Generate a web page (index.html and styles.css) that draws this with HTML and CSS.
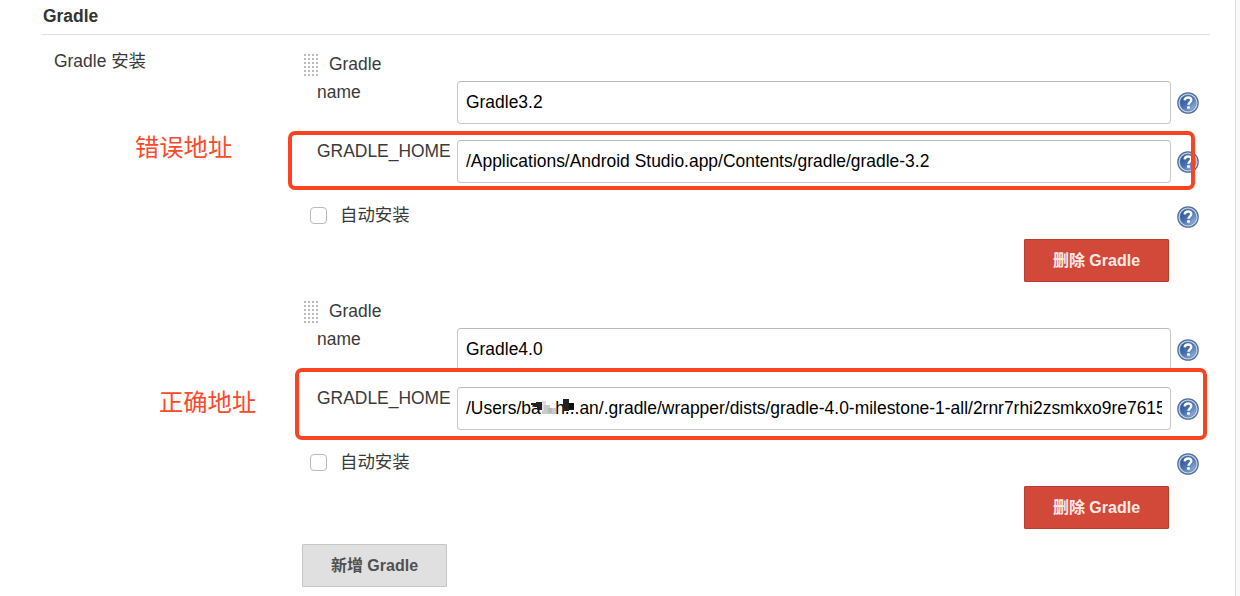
FILE: index.html
```html
<!DOCTYPE html>
<html lang="zh-CN">
  <head>
    <meta charset="UTF-8" />
    <title>Gradle</title>
    <link rel="stylesheet" href="styles.css">
  </head>
  <body>
    <!-- Shared help icon -->
    <svg class="defs" width="0" height="0">
      <defs>
        <linearGradient id="helpFill" x1="0" y1="0" x2="1" y2="1">
          <stop offset="0" stop-color="#234c90" />
          <stop offset="0.5" stop-color="#4a72b0" />
          <stop offset="1" stop-color="#a9c8ea" />
        </linearGradient>
        <symbol id="help" viewBox="0 0 22 22">
          <circle cx="11" cy="11" r="10.2" fill="#c3d3e8" stroke="#4f6c9b" stroke-width="1.2" />
          <circle cx="11" cy="11" r="8" fill="url(#helpFill)" stroke="#5378ad" stroke-width="0.6" />
          <path d="M7.6 8.4C7.8 6.4 9.1 5.5 11.1 5.5c1.9 0 3.2 1 3.2 2.6 0 2.2-2.8 2.3-2.8 4.7" fill="none" stroke="#fff" stroke-width="2.4" />
          <rect x="10" y="14.2" width="3" height="2.6" rx="0.8" fill="#fff" />
        </symbol>
      </defs>
    </svg>

    <main class="panel">
      <h1 class="section-title">Gradle</h1>
      <div class="section">
        <div class="section-label">Gradle 安装</div>
        <div class="installations">
          <div class="installation">
            <div class="drag-row"><span class="drag-handle"></span>Gradle</div>
            <div class="field">
              <label for="name1">name</label>
              <input class="text" id="name1" type="text" value="Gradle3.2">
              <svg class="help"><use href="#help" /></svg>
            </div>
            <div class="field">
              <label for="home1">GRADLE_HOME</label>
              <input class="text" id="home1" type="text" value="/Applications/Android Studio.app/Contents/gradle/gradle-3.2">
              <svg class="help"><use href="#help" /></svg>
            </div>
            <div class="auto-row">
              <input class="check" id="auto1" type="checkbox">
              <label for="auto1">自动安装</label>
              <svg class="help"><use href="#help" /></svg>
            </div>
            <button class="btn btn-delete">删除 Gradle</button>
          </div>

          <div class="installation">
            <div class="drag-row"><span class="drag-handle"></span>Gradle</div>
            <div class="field">
              <label for="name2">name</label>
              <input class="text" id="name2" type="text" value="Gradle4.0">
              <svg class="help"><use href="#help" /></svg>
            </div>
            <div class="field">
              <label for="home2">GRADLE_HOME</label>
              <input class="text" id="home2" type="text" value="/Users/ba   h...an/.gradle/wrapper/dists/gradle-4.0-milestone-1-all/2rnr7rhi2zsmkxo9re7615">
              <svg class="help"><use href="#help" /></svg>
            </div>
            <div class="auto-row">
              <input class="check" id="auto2" type="checkbox">
              <label for="auto2">自动安装</label>
              <svg class="help"><use href="#help" /></svg>
            </div>
            <button class="btn btn-delete">删除 Gradle</button>
          </div>

          <button class="btn btn-add">新增 Gradle</button>
        </div>
      </div>
    </main>

    <!-- Annotations over the form -->
    <div class="mark mark-wrong"></div>
    <div class="note note-wrong">错误地址</div>
    <div class="mark mark-right"></div>
    <div class="note note-right">正确地址</div>
    <svg class="smudge" width="46" height="17" viewBox="0 0 46 17">
      <path d="M0 5h5V4h6v8H6V9H3V7H0z" fill="#222" />
      <path d="M11 3h4v4h4v3h6v6H11z" fill="#c9c9c9" />
      <path d="M11 3h4v4h-2v6h-2z" fill="#dedede" />
      <path d="M17 10h4v5h-4z" fill="#b9b9b9" />
      <path d="M32 1h6v4h5v7h-5v1h-6z" fill="#222" />
      <path d="M38 5h5v6h-5z" fill="#111" />
    </svg>
  </body>
</html>
```

FILE: styles.css
```css
* {
  box-sizing: border-box;
}
body {
  position: relative;
  height: 596px;
  margin: 0;
  overflow: hidden;
  background: #f9f9f9;
  color: #3a3a3a;
  font-family: "Liberation Sans", "Noto Sans CJK SC", sans-serif;
  font-size: 17.45px;
  line-height: 24px;
}
.defs {
  position: absolute;
}
.panel {
  width: 1236px;
  height: 596px;
  padding: 4px 25px 0 42px;
  background: #fff;
  border-right: 1px solid #ddd;
}
.section-title {
  height: 31px;
  margin: 0;
  padding-left: 1px;
  border-bottom: 1px solid #ddd;
  color: #333;
  font-size: 17.45px;
  line-height: 24px;
}
.section {
  display: flex;
  padding-top: 14px;
}
.section-label {
  width: 260px;
  padding-left: 12px;
}
.installations {
  width: 897px;
}
.installation {
  height: 247px;
}
.drag-row {
  display: flex;
  align-items: center;
  height: 32px;
  padding: 0 0 3px 1px;
}
.drag-handle {
  width: 16px;
  height: 24px;
  margin: 2px 10px 0 0;
  background: radial-gradient(circle at 2px 2px, #bbb 1px, transparent 1.4px) 0 0 / 4px 4px;
}
.field {
  display: flex;
  align-items: flex-start;
  height: 59px;
}
.field label {
  width: 155px;
  margin-top: -1px;
  padding-left: 15px;
}
.text {
  width: 714px;
  height: 43px;
  padding: 0 8px 1px;
  background: #fff;
  border: 1px solid #c8c8c8;
  border-top-color: #bbb;
  border-radius: 4px;
  color: #000;
  font: inherit;
}
.help {
  flex: none;
  width: 22px;
  height: 22px;
  margin: 11px 0 0 6px;
}
.auto-row {
  display: flex;
  align-items: center;
  height: 32px;
  padding-left: 8px;
}
.check {
  appearance: none;
  width: 17px;
  height: 17px;
  margin: 0 13px 0 0;
  background: #fff;
  border: 1px solid #bbb;
  border-radius: 4px;
}
.auto-row .help {
  margin: 4px 0 0 auto;
}
.btn {
  display: block;
  width: 145px;
  height: 43px;
  padding: 0;
  border: 1px solid;
  border-radius: 1px;
  font: bold 16px/24px "Liberation Sans", "Noto Sans CJK SC", sans-serif;
}
.btn-delete {
  margin: 8px 0 0 722px;
  background: #d24939;
  border-color: #b83e30;
  color: #fbe9e6;
}
.btn-add {
  margin-top: 1px;
  background: #e0e0e0;
  border-color: #c6c6c6;
  color: #505050;
}
.mark {
  position: absolute;
  border: 4px solid #fa4321;
  border-radius: 7px;
}
.mark-wrong {
  left: 288px;
  top: 131px;
  width: 907px;
  height: 59px;
}
.mark-right {
  left: 295px;
  top: 368px;
  width: 912px;
  height: 72px;
}
.note {
  position: absolute;
  color: #fa4a2b;
  font-size: 24.3px;
  line-height: 36px;
}
.note-wrong {
  left: 135px;
  top: 130px;
}
.note-right {
  left: 159px;
  top: 385px;
}
.smudge {
  position: absolute;
  left: 531px;
  top: 398px;
}
```
